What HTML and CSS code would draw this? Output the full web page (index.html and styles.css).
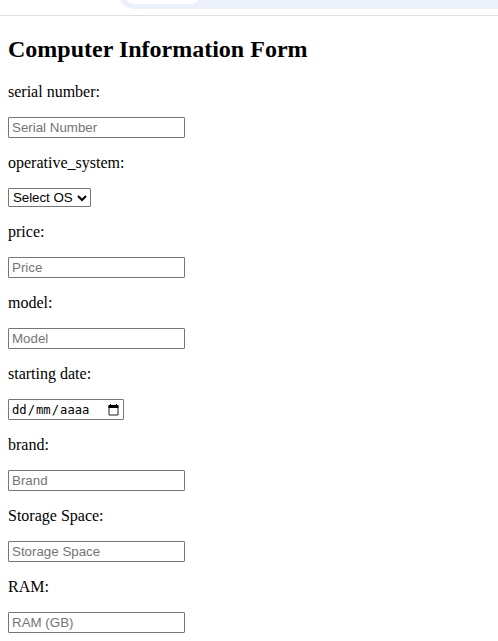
FILE: index.html
```html
<!DOCTYPE html>
<html lang="en">
<head>
<meta charset="utf-8">
<title>Computer Information Form</title>
<link rel="stylesheet" href="styles.css">
</head>
<body>
<header class="browser-bar"><div class="address"><span class="chip"></span></div></header>
<main>
<h2>Computer Information Form</h2>
<form>
<p>serial number:</p>
<input class="field" type="text" placeholder="Serial Number">
<p>operative_system:</p>
<div class="select"><span>Select OS</span><svg width="10" height="8" viewBox="0 0 10 8"><path d="M1 2l4 4 4-4" fill="none" stroke="#000" stroke-width="2"/></svg></div>
<p>price:</p>
<input class="field" type="text" placeholder="Price">
<p>model:</p>
<input class="field" type="text" placeholder="Model">
<p>starting date:</p>
<div class="date"><div><span>dd</span>/<span>mm</span>/<span>aaaa</span></div><svg width="11" height="12" viewBox="0 0 11 12"><path d="M1 2.5h9v8.5H1z" fill="none" stroke="#222"/><path d="M.5 1h10v3H.5zM2 0h1v2H2zM8 0h1v2H8z"/></svg></div>
<p>brand:</p>
<input class="field" type="text" placeholder="Brand">
<p>Storage Space:</p>
<input class="field" type="text" placeholder="Storage Space">
<p>RAM:</p>
<input class="field" type="text" placeholder="RAM (GB)">
</form>
</main>
</body>
</html>
```
FILE: styles.css
```css
* { box-sizing: border-box; }
html { overflow: hidden; }
body { margin: 0; background: #fff; color: #000; font: 16px/18px "Liberation Serif", serif; }
.browser-bar { height: 16px; padding-left: 121px; border-bottom: 1px solid #dfe0e2; overflow: hidden; }
.address { height: 9px; padding-left: 6px; background: #ebf0fa; border-bottom-left-radius: 16px 10px; }
.chip { display: block; width: 71px; height: 4px; background: #fff; border-radius: 0 0 9px 9px / 0 0 4px 4px; }
main { padding: 0 8px; }
h2 { margin: 20px 0; font-size: 24px; line-height: 27px; }
p { margin: 16px 0; }
.field { display: block; width: 177px; height: 21px; margin: 0; padding: 1px 2px 1px 3px; border: 1px solid #767676; border-radius: 1px; font: 13.333px "Liberation Sans", sans-serif; }
.field::placeholder { color: #757575; }
.select { display: flex; align-items: center; justify-content: space-between; width: 83px; height: 19px; padding: 0 3px 0 4px; border: 1px solid #767676; border-radius: 1px; font: 13.333px "Liberation Sans", sans-serif; letter-spacing: -.05px; }
.date { display: flex; align-items: center; justify-content: space-between; width: 116px; height: 21px; padding: 0 4px 0 2px; border: 1px solid #767676; border-radius: 1px; font: 12.2px "DejaVu Sans Mono", monospace; }
.date span { padding: 0 1px; }
```
